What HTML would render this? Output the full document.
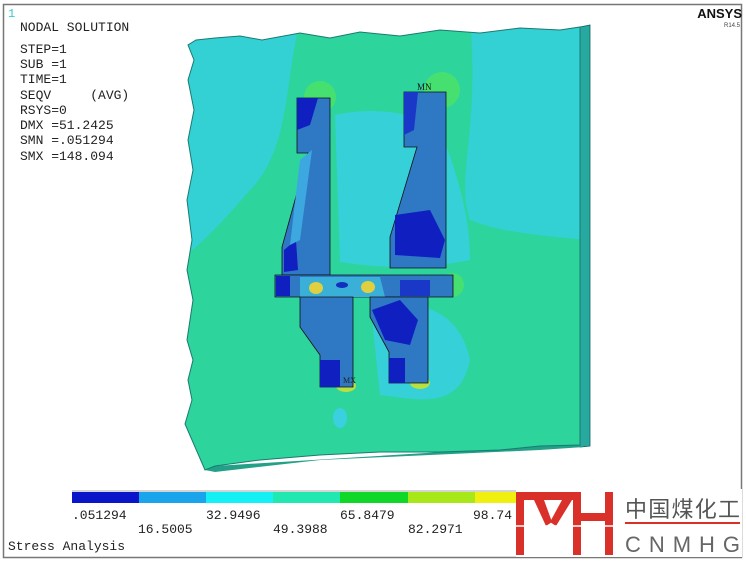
<!DOCTYPE html>
<html><head><meta charset="utf-8"><style>
html,body{margin:0;padding:0;background:#fff;width:746px;height:562px;overflow:hidden}
svg{display:block}
.m{font-family:"Liberation Mono",monospace;font-size:13px;fill:#222;white-space:pre}
</style></head><body>
<svg width="746" height="562" viewBox="0 0 746 562" xmlns="http://www.w3.org/2000/svg" xml:space="preserve">
<rect x="3.5" y="4.5" width="738" height="553" fill="#fff" stroke="#777" stroke-width="1.5"/>
<text x="8" y="17" font-family="Liberation Mono,monospace" font-size="12" fill="#3cc">1</text>
<text class="m" x="20" y="31">NODAL SOLUTION</text>
<text class="m" x="20" y="53">STEP=1</text>
<text class="m" x="20" y="68">SUB =1</text>
<text class="m" x="20" y="83">TIME=1</text>
<text class="m" x="20" y="99">SEQV     (AVG)</text>
<text class="m" x="20" y="114">RSYS=0</text>
<text class="m" x="20" y="129">DMX =51.2425</text>
<text class="m" x="20" y="144">SMN =.051294</text>
<text class="m" x="20" y="160">SMX =148.094</text>
<text x="742" y="18" text-anchor="end" font-family="Liberation Sans,sans-serif" font-weight="bold" font-size="13" fill="#111">ANSYS</text>
<text x="740" y="27" text-anchor="end" font-family="Liberation Sans,sans-serif" font-size="6" fill="#444">R14.5</text>
<defs>
<clipPath id="pl"><polygon points="196,40 215,38 240,36 262,40 300,33 330,38 360,32 400,36 440,30 480,33 520,28 560,30 580,27 580,445 540,446 500,450 440,452 380,452 320,455 260,460 215,466 205,470 185,424 192,400 188,380 193,360 187,340 193,300 187,270 192,240 187,200 193,170 188,140 194,110 188,80 194,60 188,45"/></clipPath>
</defs>
<polygon points="580,27 590,25 590,446 580,447" fill="#27a9a0" stroke="#0d6060" stroke-width="0.8"/>
<polygon points="205,470 215,466 540,446 580,445 584,447 540,450 320,460 215,472" fill="#23a088"/>
<g clip-path="url(#pl)">
<rect x="180" y="20" width="410" height="460" fill="#2dd49c"/>
<path d="M180,20 H300 C285,80 290,150 250,190 C220,225 200,245 180,260 Z" fill="#33d0d4"/>
<path d="M470,20 H590 V240 C540,236 500,232 470,220 C455,180 480,130 470,20 Z" fill="#33d0d4"/>
<path d="M335,115 C380,105 420,115 440,130 C460,180 470,220 470,260 C420,270 380,268 340,262 Z" fill="#36d0d8"/>
<path d="M370,300 C420,300 460,310 470,360 C460,410 420,400 380,395 Z" fill="#36d0d8"/>
<ellipse cx="340" cy="418" rx="7" ry="10" fill="#3ad0e0"/>
<circle cx="320" cy="97" r="16" fill="#46e070"/>
<circle cx="442" cy="90" r="18" fill="#46e070"/>
<circle cx="452" cy="285" r="12" fill="#46e070"/>
<ellipse cx="346" cy="386" rx="10" ry="6" fill="#b8e040"/>
<ellipse cx="420" cy="383" rx="10" ry="6" fill="#b8e040"/>
</g>
<polygon points="196,40 215,38 240,36 262,40 300,33 330,38 360,32 400,36 440,30 480,33 520,28 560,30 580,27 580,445 540,446 500,450 440,452 380,452 320,455 260,460 215,466 205,470 185,424 192,400 188,380 193,360 187,340 193,300 187,270 192,240 187,200 193,170 188,140 194,110 188,80 194,60 188,45 196,40" fill="none" stroke="#1a7a70" stroke-width="1"/>
<polygon points="297,98 330,98 330,275 282,275 282,247 308,153 297,153" fill="#2f78c4" stroke="#111" stroke-width="0.8"/>
<polygon points="297,98 318,98 310,125 297,130" fill="#1020c0"/>
<polygon points="284,250 296,240 298,270 284,272" fill="#1020c0"/>
<polygon points="300,160 312,150 300,240 290,245" fill="#3da8e0"/>
<polygon points="404,92 446,92 446,268 390,268 390,237 417,147 404,147" fill="#2f78c4" stroke="#111" stroke-width="0.8"/>
<polygon points="395,215 430,210 445,240 440,258 395,255" fill="#1020c0"/>
<polygon points="404,92 418,92 414,130 404,135" fill="#1a38c8"/>
<polygon points="275,275 453,275 453,297 275,297" fill="#2f78c4" stroke="#111" stroke-width="0.8"/>
<polygon points="300,277 380,277 385,297 300,297" fill="#3ab0d8"/>
<ellipse cx="316" cy="288" rx="7" ry="6" fill="#e0d040"/>
<ellipse cx="368" cy="287" rx="7" ry="6" fill="#e0d040"/>
<ellipse cx="342" cy="285" rx="6" ry="3" fill="#1030c0"/>
<polygon points="276,276 290,276 290,296 276,296" fill="#1020c0"/>
<polygon points="400,280 430,280 430,296 400,296" fill="#1a38c8"/>
<polygon points="300,297 353,297 353,387 320,387 320,355 300,327" fill="#2f78c4" stroke="#111" stroke-width="0.8"/>
<polygon points="320,360 340,360 340,387 320,387" fill="#1020c0"/>
<polygon points="370,297 428,297 428,383 389,383 389,352 370,317" fill="#2f78c4" stroke="#111" stroke-width="0.8"/>
<polygon points="372,310 400,300 418,320 410,345 385,340" fill="#1020c0"/>
<polygon points="389,358 405,358 405,383 389,383" fill="#1020c0"/>
<text x="417" y="90" font-family="Liberation Serif,serif" font-size="9" fill="#111">MN</text>
<text x="343" y="383" font-family="Liberation Serif,serif" font-size="8" fill="#222">MX</text>
<rect x="72" y="492" width="67" height="11" fill="#0a14c8"/>
<rect x="139" y="492" width="67" height="11" fill="#1aa4ec"/>
<rect x="206" y="492" width="67" height="11" fill="#14f0f4"/>
<rect x="273" y="492" width="67" height="11" fill="#20e8b0"/>
<rect x="340" y="492" width="68" height="11" fill="#10d828"/>
<rect x="408" y="492" width="67" height="11" fill="#a8e818"/>
<rect x="475" y="492" width="46" height="11" fill="#f0f010"/>
<line x1="72" y1="491" x2="600" y2="491" stroke="#aaa"/>
<text class="m" x="72" y="519">.051294</text>
<text class="m" x="206" y="519">32.9496</text>
<text class="m" x="340" y="519">65.8479</text>
<text class="m" x="473" y="519">98.74</text>
<text class="m" x="138" y="533">16.5005</text>
<text class="m" x="273" y="533">49.3988</text>
<text class="m" x="408" y="533">82.2971</text>
<text class="m" x="8" y="550">Stress Analysis</text>
<rect x="516" y="489" width="226" height="68" fill="#fff"/>
<g fill="#d9302a">
<rect x="516" y="492" width="8" height="63"/>
<rect x="516" y="492" width="64" height="8"/>
<polygon points="534,500 544,500 552,522 546,526"/>
<polygon points="562,500 572,500 556,526 550,522"/>
<rect x="573" y="492" width="8" height="63"/>
<rect x="581" y="513" width="25" height="8"/>
<rect x="605" y="492" width="8" height="63"/>
</g>
<line x1="516" y1="526" x2="613" y2="526" stroke="#fff" stroke-width="1.5"/>
<text x="625" y="517" font-family="Liberation Sans,'Noto Sans CJK SC',sans-serif" font-size="22" fill="#555" textLength="115">中国煤化工</text>
<rect x="625" y="522" width="115" height="2" fill="#d9302a"/>
<text x="625" y="552" font-family="Liberation Sans,sans-serif" font-size="22" fill="#666" textLength="115" lengthAdjust="spacing">CNMHG</text>
</svg>
</body></html>
